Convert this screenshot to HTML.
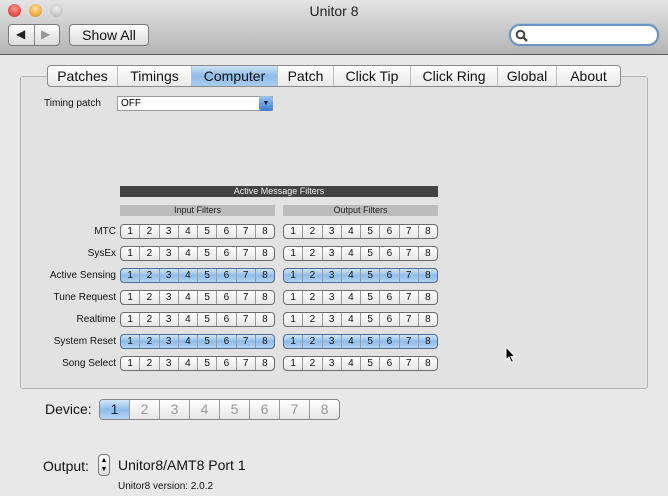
<!DOCTYPE html>
<html><head><style>
*{box-sizing:border-box;margin:0;padding:0}
body{width:668px;height:496px;overflow:hidden;background:#e8e8e8;font-family:"Liberation Sans",sans-serif;position:relative}
.abs{position:absolute}
#title{left:0;top:0;width:668px;height:55px;background:linear-gradient(#e4e4e4,#b4b4b4);border-bottom:1px solid #555}
.light{width:13px;height:13px;border-radius:50%;top:4px}
.btn{background:linear-gradient(#fdfdfd,#dcdcdc);border:1px solid #7a7a7a;border-radius:4px}
.tabs{left:47px;top:65px;height:22px;display:flex;border:1px solid #8a8a8a;border-radius:4px;background:linear-gradient(#fff,#e9e9e9);overflow:hidden}
.tabs div{font-size:14px;line-height:20px;text-align:center;border-right:1px solid #c0c0c0;color:#111}
.tabs div:last-child{border-right:none}
.tabs .sel{background:linear-gradient(#cfe3f7,#8fbbe8 50%,#a9cdf1)}
#panel{left:20px;top:76px;width:628px;height:313px;border:1px solid #b6b6b6;border-radius:3px;background:#e2e2e2}
.seg{position:absolute;height:15px;display:flex;border:1px solid #6d6d6d;border-radius:4px;overflow:hidden;background:linear-gradient(#fff,#e6e6e6)}
.seg div{flex:1;font-size:10px;line-height:13px;text-align:center;border-right:1px solid #999;color:#111}
.seg div:last-child{border-right:none}
.seg.on{background:linear-gradient(#d3e6f8,#8ebcea 50%,#b3d4f3);border-color:#4d6d93}
.lbl{position:absolute;font-size:10px;text-align:right;width:110px;left:6px;color:#111}
</style></head><body>
<div id="title" class="abs"></div>
<div class="abs light" style="left:8px;background:radial-gradient(circle at 50% 35%,#ff9a8f,#d0201a)"></div>
<div class="abs light" style="left:29px;background:radial-gradient(circle at 50% 35%,#ffe09a,#e08a10)"></div>
<div class="abs light" style="left:50px;background:radial-gradient(circle at 50% 35%,#eee,#b0b0b0)"></div>
<div class="abs" style="left:0;width:668px;top:3px;text-align:center;font-size:14px;color:#222">Unitor 8</div>
<div class="abs btn" style="left:8px;top:24px;width:52px;height:22px"></div>
<div class="abs" style="left:34px;top:25px;width:1px;height:20px;background:#888"></div>
<div class="abs" style="left:16px;top:27px;font-size:12px;color:#222">◀</div>
<div class="abs" style="left:41px;top:27px;font-size:12px;color:#999">▶</div>
<div class="abs btn" style="left:69px;top:24px;width:80px;height:22px;font-size:14px;text-align:center;line-height:20px;color:#111">Show All</div>
<div class="abs" style="left:509px;top:24px;width:150px;height:22px;border-radius:11px;background:#fff;border:2px solid #6b93c6;box-shadow:0 0 2px #8ab"></div>
<svg class="abs" style="left:515px;top:29px" width="14" height="14"><circle cx="5.5" cy="5.5" r="3.8" fill="none" stroke="#444" stroke-width="2"/><line x1="8.3" y1="8.3" x2="12" y2="12" stroke="#444" stroke-width="2.4"/></svg>
<div id="panel" class="abs"></div>
<div class="abs tabs">
<div style="width:70px">Patches</div><div style="width:74px">Timings</div><div class="sel" style="width:86px">Computer</div><div style="width:56px">Patch</div><div style="width:77px">Click Tip</div><div style="width:87px">Click Ring</div><div style="width:59px">Global</div><div style="width:63px">About</div>
</div>
<div class="abs" style="left:44px;top:98px;font-size:10px;color:#111">Timing patch</div>
<div class="abs" style="left:117px;top:96px;width:156px;height:15px;background:#fff;border:1px solid #999;font-size:10px;line-height:13px;padding-left:3px">OFF</div>
<div class="abs" style="left:259px;top:96px;width:14px;height:15px;border-radius:3px;background:linear-gradient(#9cc5f0,#3a7ed0);color:#123;font-size:7px;text-align:center;line-height:15px">▼</div>
<div class="abs" style="left:120px;top:186px;width:318px;height:11px;background:#434343;color:#eee;font-size:9px;text-align:center;line-height:11px">Active Message Filters</div>
<div class="abs" style="left:120px;top:205px;width:155px;height:11px;background:#bcbcbc;color:#222;font-size:9px;text-align:center;line-height:11px">Input Filters</div>
<div class="abs" style="left:283px;top:205px;width:155px;height:11px;background:#bcbcbc;color:#222;font-size:9px;text-align:center;line-height:11px">Output Filters</div>
<div id="rows"></div>
<div class="abs" style="left:45px;top:401px;font-size:14px;color:#111">Device:</div>
<div class="seg" style="left:99px;top:399px;width:241px;height:21px;border-color:#888">
<div style="font-size:14px;line-height:19px;background:linear-gradient(#d3e6f8,#8ebcea 50%,#b3d4f3);color:#124">1</div>
<div style="font-size:14px;line-height:19px;color:#999">2</div><div style="font-size:14px;line-height:19px;color:#999">3</div><div style="font-size:14px;line-height:19px;color:#999">4</div><div style="font-size:14px;line-height:19px;color:#999">5</div><div style="font-size:14px;line-height:19px;color:#999">6</div><div style="font-size:14px;line-height:19px;color:#999">7</div><div style="font-size:14px;line-height:19px;color:#999">8</div>
</div>
<div class="abs" style="left:43px;top:458px;font-size:14px;color:#111">Output:</div>
<div class="abs btn" style="left:98px;top:454px;width:12px;height:22px;font-size:7px;text-align:center;line-height:9px;padding-top:1px">▲<br>▼</div>
<div class="abs" style="left:118px;top:457px;font-size:14px;color:#111">Unitor8/AMT8 Port 1</div>
<div class="abs" style="left:118px;top:481px;font-size:10px;color:#111">Unitor8 version: 2.0.2</div>
<svg class="abs" style="left:505px;top:346px" width="12" height="18"><path d="M1 1 L1 14 L4 11 L6.5 16.5 L8.5 15.5 L6 10.5 L10 10.5 Z" fill="#000" stroke="#fff" stroke-width="1"/></svg>
<script>
var names=["MTC","SysEx","Active Sensing","Tune Request","Realtime","System Reset","Song Select"];
var on=[0,0,1,0,0,1,0];var h="";
for(var i=0;i<7;i++){var y=224+i*22;
h+='<div class="lbl" style="top:'+(y+2)+'px">'+names[i]+'</div>';
[120,283].forEach(function(x){h+='<div class="seg'+(on[i]?' on':'')+'" style="left:'+x+'px;top:'+y+'px;width:155px">';for(var k=1;k<=8;k++)h+='<div>'+k+'</div>';h+='</div>';});}
document.getElementById('rows').innerHTML=h;
</script>
</body></html>
